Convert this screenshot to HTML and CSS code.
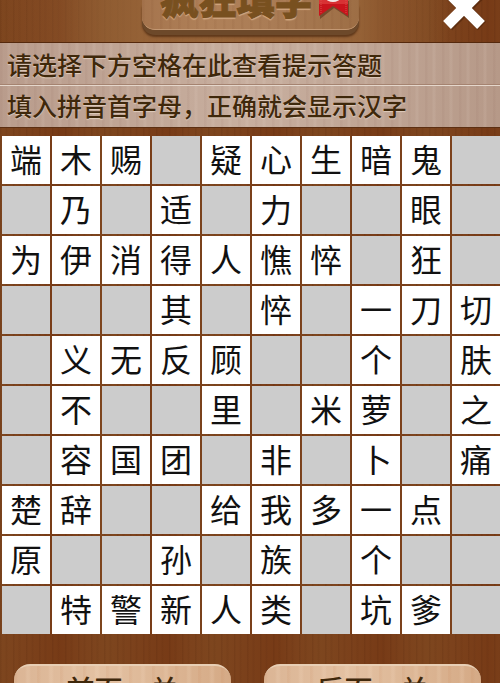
FILE: index.html
```html
<!DOCTYPE html>
<html lang="zh-CN">
<head>
    <meta charset="UTF-8">
    <meta name="viewport" content="width=device-width, initial-scale=1.0">
    <title>疯狂填字</title>
    <link rel="stylesheet" href="styles.css">
</head>
<body>
    <header class="header">
        <div class="sign">
            <h1 class="title">疯狂填字</h1>
            <svg class="ribbon" width="32" height="20" viewBox="0 0 32 20" aria-hidden="true">
                <path d="M1 0H30V17L15 7L1 18Z" fill="#4a2410" opacity=".5" transform="translate(1 1)"/>
                <path d="M1 0H30V16L15 6L1 16Z" fill="#c9141c"/>
                <path d="M1 0H30V4H1Z" fill="#d83234"/>
                <path d="M3 0V13M28 0V13" stroke="#dc4a48" stroke-width="1" stroke-dasharray="1 1"/>
                <ellipse cx="15" cy="-2" rx="7" ry="4" fill="#f3e6e4"/>
            </svg>
        </div>
        <button class="close" type="button" aria-label="关闭">
            <svg width="48" height="48" viewBox="0 0 48 48">
                <path d="M7 7L41 41M41 7L7 41" stroke="#3a1804" stroke-width="12" opacity=".4" transform="translate(1 1)"/>
                <path d="M7 7L41 41M41 7L7 41" stroke="#fff" stroke-width="11"/>
            </svg>
        </button>
    </header>

    <section class="hints">
        <p class="hint">请选择下方空格在此查看提示答题</p>
        <p class="hint">填入拼音首字母，正确就会显示汉字</p>
    </section>

    <main class="board">
        <div class="cell">端</div><div class="cell">木</div><div class="cell">赐</div><div class="cell blank"></div><div class="cell">疑</div><div class="cell">心</div><div class="cell">生</div><div class="cell">暗</div><div class="cell">鬼</div><div class="cell blank"></div>
        <div class="cell blank"></div><div class="cell">乃</div><div class="cell blank"></div><div class="cell">适</div><div class="cell blank"></div><div class="cell">力</div><div class="cell blank"></div><div class="cell blank"></div><div class="cell">眼</div><div class="cell blank"></div>
        <div class="cell">为</div><div class="cell">伊</div><div class="cell">消</div><div class="cell">得</div><div class="cell">人</div><div class="cell">憔</div><div class="cell">悴</div><div class="cell blank"></div><div class="cell">狂</div><div class="cell blank"></div>
        <div class="cell blank"></div><div class="cell blank"></div><div class="cell blank"></div><div class="cell">其</div><div class="cell blank"></div><div class="cell">悴</div><div class="cell blank"></div><div class="cell">一</div><div class="cell">刀</div><div class="cell">切</div>
        <div class="cell blank"></div><div class="cell">义</div><div class="cell">无</div><div class="cell">反</div><div class="cell">顾</div><div class="cell blank"></div><div class="cell blank"></div><div class="cell">个</div><div class="cell blank"></div><div class="cell">肤</div>
        <div class="cell blank"></div><div class="cell">不</div><div class="cell blank"></div><div class="cell blank"></div><div class="cell">里</div><div class="cell blank"></div><div class="cell">米</div><div class="cell">萝</div><div class="cell blank"></div><div class="cell">之</div>
        <div class="cell blank"></div><div class="cell">容</div><div class="cell">国</div><div class="cell">团</div><div class="cell blank"></div><div class="cell">非</div><div class="cell blank"></div><div class="cell">卜</div><div class="cell blank"></div><div class="cell">痛</div>
        <div class="cell">楚</div><div class="cell">辞</div><div class="cell blank"></div><div class="cell blank"></div><div class="cell">给</div><div class="cell">我</div><div class="cell">多</div><div class="cell">一</div><div class="cell">点</div><div class="cell blank"></div>
        <div class="cell">原</div><div class="cell blank"></div><div class="cell blank"></div><div class="cell">孙</div><div class="cell blank"></div><div class="cell">族</div><div class="cell blank"></div><div class="cell">个</div><div class="cell blank"></div><div class="cell blank"></div>
        <div class="cell blank"></div><div class="cell">特</div><div class="cell">警</div><div class="cell">新</div><div class="cell">人</div><div class="cell">类</div><div class="cell blank"></div><div class="cell">坑</div><div class="cell">爹</div><div class="cell blank"></div>
    </main>

    <nav class="levels">
        <button class="level-button" type="button">前面一关</button>
        <button class="level-button" type="button">后面一关</button>
    </nav>
</body>
</html>
```
FILE: styles.css
```css
* {
    box-sizing: border-box;
}

body {
    margin: 0;
    height: 100vh;
    overflow: hidden;
    font-family: "Liberation Sans", "Noto Sans CJK SC", sans-serif;
    background-color: #7c421c;
    /* wood grain */
    background-image:
        repeating-linear-gradient(90deg, rgba(60, 20, 0, 0.1) 0 1px, transparent 2px 5px, rgba(60, 20, 0, 0.06) 6px 7px, transparent 8px 13px),
        repeating-linear-gradient(90deg, rgba(130, 85, 40, 0.2) 0, transparent 23px, rgba(100, 30, 0, 0.2) 61px, transparent 84px, rgba(130, 85, 40, 0.2) 107px);
}

.header {
    position: relative;
    display: flex;
    justify-content: center;
    height: 43px;
    background: linear-gradient(90deg, transparent, rgba(160, 112, 66, 0.7) 28%, rgba(160, 112, 66, 0.7) 72%, transparent 90%);
    border-bottom: 1px solid #55290d;
}

.sign {
    position: relative;
    width: 217px;
    height: 30px;
    border-radius: 0 0 13px 13px;
    background:
        repeating-linear-gradient(90deg, rgba(110, 60, 30, 0.07) 0 2px, transparent 3px 9px),
        linear-gradient(90deg, #a5744d, #b08159 30%, #aa7c55 60%, #9d6e45);
    border-bottom: 1px solid #c39873;
    box-shadow: 0 5px 0 #6d492a, 0 7px 2px rgba(60, 28, 8, 0.6);
}

.title {
    display: flex;
    justify-content: center;
    margin: 0;
    padding-right: 27px;
    height: 24px;
    align-items: flex-end;
    font-size: 38px;
    line-height: 46px;
    font-weight: 900;
    color: #78501f;
    -webkit-text-stroke: 1px #78501f;
    text-shadow: 0 2px 1px #d0a67f;
    white-space: nowrap;
}

.ribbon {
    position: absolute;
    top: 0;
    right: 9px;
}

.close {
    position: absolute;
    top: -16px;
    right: 12px;
    padding: 0;
    border: none;
    background: none;
    cursor: pointer;
}

.close svg {
    display: block;
}

.hints {
    border-bottom: 1px solid #5c2f12;
    background:
        repeating-linear-gradient(90deg, rgba(120, 75, 65, 0.06) 0 2px, transparent 3px 7px, rgba(255, 240, 230, 0.08) 8px 10px, transparent 11px 17px),
        linear-gradient(90deg, #b99c8c, #c8af9f 50%, #b69988);
}

.hint {
    margin: 0;
    height: 42px;
    padding: 5px 7px;
    font-size: 25px;
    line-height: 36px;
    font-weight: 500;
    color: #3f280b;
    text-shadow: 0 1px 1px #dfcdbd;
    white-space: nowrap;
}

.hint + .hint {
    border-top: 1px solid #e5d7cc;
    box-shadow: 0 -1px 0 #a58370;
    padding-top: 3px;
}

.board {
    display: grid;
    grid-template-columns: repeat(10, 1fr);
    grid-auto-rows: 48px;
    gap: 2px;
    margin-top: 8px;
    padding-left: 2px;
}

.cell {
    display: flex;
    align-items: center;
    justify-content: center;
    padding-top: 2px;
    background-color: #fff;
    color: #111;
    font-size: 32px;
    line-height: 46px;
}

.blank {
    background-color: #ccc;
}

.levels {
    display: grid;
    grid-template-columns: 1fr 1fr;
    gap: 33px;
    padding: 30px 19px 0 14px;
}

.level-button {
    height: 54px;
    padding: 0;
    border: none;
    border-top: 2px solid #e8cfb5;
    border-radius: 16px;
    background:
        repeating-linear-gradient(90deg, rgba(190, 110, 60, 0.08) 0 2px, transparent 4px 11px, rgba(255, 235, 215, 0.12) 13px 15px, transparent 17px 23px),
        linear-gradient(90deg, #dbb595, #e3c1a2 40%, #d5aa86);
    color: #3f280b;
    font-family: inherit;
    font-size: 28px;
    font-weight: 500;
    line-height: 50px;
    cursor: pointer;
}
```
